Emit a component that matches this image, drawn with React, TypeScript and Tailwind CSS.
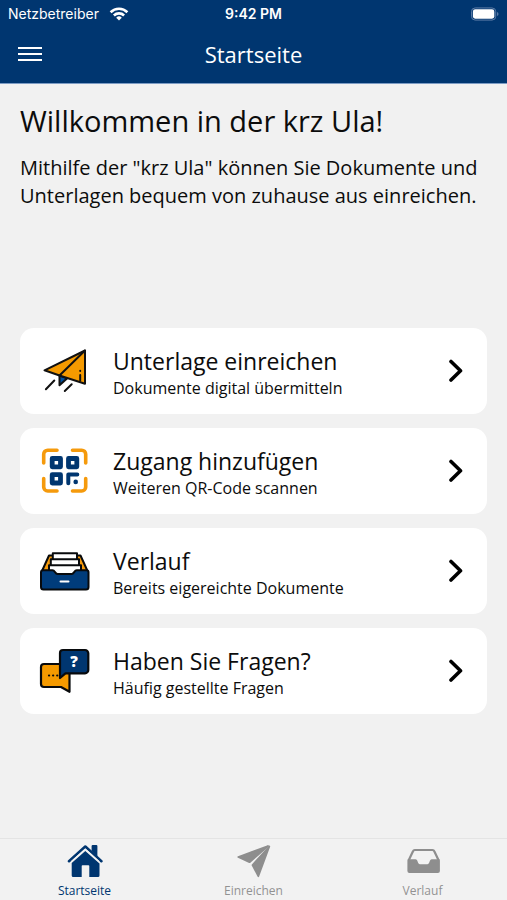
import React from "react";

function WifiIcon() {
  return (
    <svg width="20" height="14" viewBox="0 0 20 14" fill="none" stroke="white" strokeWidth="2.6" aria-hidden="true">
      <path d="M1.6 5.2a12 12 0 0 1 16.8 0" />
      <path d="M4.9 8.5a7.3 7.3 0 0 1 10.2 0" />
      <path d="M10 13.6L7.2 10.7a4 4 0 0 1 5.6 0z" fill="white" stroke="none" />
    </svg>
  );
}

function BatteryIcon() {
  return (
    <svg width="28" height="14" viewBox="0 0 30 14" aria-hidden="true">
      <rect x="0.5" y="0.5" width="26" height="13" rx="4" fill="none" stroke="#6482ab" />
      <rect x="2" y="2" width="23" height="10" rx="2.5" fill="white" />
      <path d="M28 4.8a2.4 2.4 0 0 1 0 4.4z" fill="#6482ab" />
    </svg>
  );
}

function PlaneIcon() {
  return (
    <svg width="60" height="60" viewBox="0 0 60 60" stroke="#111" strokeWidth="2" strokeLinejoin="round" strokeLinecap="round" aria-hidden="true">
      <path d="M24.5 34.5V44.3L32.3 37.2z" fill="#0050a0" />
      <path d="M9.5 29.3L50 9.5V42.7L24.5 34.5z" fill="#f59a00" />
      <path d="M50 9.5L24.5 34.5M45.2 34V39.4M45.2 29.8v.2M19.3 39.5L10.9 48.3M36.7 43.3L29.8 50" fill="none" />
    </svg>
  );
}

function QrIcon() {
  return (
    <svg width="60" height="60" viewBox="0 0 60 60" fill="none" aria-hidden="true">
      <path d="M8.7 22V13.2a4 4 0 0 1 4-4H22M37.5 9.2h9.2a4 4 0 0 1 4 4V22M50.7 37.5V46a4 4 0 0 1-4 4H37.5M22 50h-9.3a4 4 0 0 1-4-4v-8.5" stroke="#f59a0c" strokeWidth="3.6" strokeLinecap="round" />
      <g stroke="#003670" strokeWidth="4.8" strokeLinejoin="round">
        <rect x="17.2" y="17.5" width="8.3" height="8.3" />
        <rect x="33.5" y="17.5" width="8.3" height="8.3" />
        <rect x="17.2" y="33.7" width="8.3" height="8.3" />
        <path d="M33.3 42.3V33.5H42.3" strokeWidth="4" strokeLinecap="round" />
      </g>
      <circle cx="40.7" cy="40.9" r="2.3" fill="#003670" />
    </svg>
  );
}

function DrawerIcon() {
  return (
    <svg width="60" height="60" viewBox="0 0 60 60" stroke="#080a0c" strokeWidth="2" strokeLinejoin="round" aria-hidden="true">
      <path d="M7 30L14 14.5H45.5L52.5 30z" fill="#f59a0c" />
      <path d="M17.8 19V12.3H42V19z" fill="white" />
      <path d="M15.8 25V18.3H44V25z" fill="white" />
      <path d="M14 30V24.3H46V30L38 36H22z" fill="white" />
      <path d="M8 29.3H17.5c2.5 0 2.5 3.7 5 3.7H36.7c2.5 0 2.5-3.7 5-3.7H51.5a2 2 0 0 1 2 2V46a2.5 2.5 0 0 1-2.5 2.5H8.5A2.5 2.5 0 0 1 6 46V31.3a2 2 0 0 1 2-2z" fill="#003c7b" />
      <path d="M25.5 40.5h8" stroke="white" strokeLinecap="round" />
    </svg>
  );
}

function ChatIcon() {
  return (
    <svg width="60" height="60" viewBox="0 0 60 60" stroke="#080a0c" strokeWidth="2.2" strokeLinejoin="round" aria-hidden="true">
      <path d="M9 23H31L34.5 28V50.8L26 46H9a3 3 0 0 1-3-3V26a3 3 0 0 1 3-3z" fill="#f59a00" />
      <path d="M28 9H50a3.3 3.3 0 0 1 3.3 3.3V29A3.3 3.3 0 0 1 50 32.3H30.5L25 37V12a3 3 0 0 1 3-3z" fill="#003670" />
      <path d="M14 34.5h.1M18.1 34.5h.1M22.2 34.5h.1" strokeLinecap="round" />
      <text x="39" y="26" textAnchor="middle" fill="white" stroke="none" className="font-['Open_Sans',sans-serif] text-[15px] font-extrabold">?</text>
    </svg>
  );
}

function HomeTabIcon() {
  return (
    <svg width="36" height="36" viewBox="0 0 36 36" fill="#003670" aria-hidden="true">
      <path d="M18.3 7.9L32.5 20.5V32.5a1.5 1.5 0 0 1-1.5 1.5H22.3V23a.8.8 0 0 0-.8-.8H15.5a.8.8 0 0 0-.8.8V34H6.2a1.5 1.5 0 0 1-1.5-1.5V20z" />
      <path d="M24.6 8V3a1 1 0 0 1 1-1H29.400a1 1 0 0 1 1 1V14z" />
      <path d="M2 18.2L18.3 3.5L34.4 18.2" fill="none" stroke="#003670" strokeWidth="2.6" strokeLinejoin="round" strokeLinecap="round" />
      <path d="M4.5 18.5L18.3 6.2L32.3 18.7" fill="none" stroke="#f2f2f2" strokeWidth="1.2" strokeLinejoin="round" />
    </svg>
  );
}

function SendTabIcon() {
  return (
    <svg width="36" height="36" viewBox="0 0 36 36" fill="#8e8e8e" stroke="#8e8e8e" strokeWidth="1.8" strokeLinejoin="round" aria-hidden="true">
      <path d="M2.3 14L32 3L13.5 19.2z" />
      <path d="M33.3 3.5L22.3 33.2L16.5 22z" />
    </svg>
  );
}

function TrayTabIcon() {
  return (
    <svg width="36" height="36" viewBox="0 0 36 36" fill="#8e8e8e" aria-hidden="true">
      <path d="M3.6 17.5L8 8.2a2 2 0 0 1 1.8-1.2H27.5a2 2 0 0 1 1.8 1.2L33.7 17.5" fill="none" stroke="#8e8e8e" strokeWidth="2.2" />
      <path d="M2.4 17.5a1.2 1.2 0 0 1 1.2-1.2H10.5c2.5 0 2 5 4.5 5H22.3c2.5 0 2-5 4.5-5H33.7a1.2 1.2 0 0 1 1.2 1.2V28a2 2 0 0 1-2 2H4.4a2 2 0 0 1-2-2z" />
    </svg>
  );
}

const cards = [
  { title: "Unterlage einreichen", text: "Dokumente digital übermitteln", Icon: PlaneIcon },
  { title: "Zugang hinzufügen", text: "Weiteren QR-Code scannen", Icon: QrIcon },
  { title: "Verlauf", text: "Bereits eigereichte Dokumente", Icon: DrawerIcon },
  { title: "Haben Sie Fragen?", text: "Häufig gestellte Fragen", Icon: ChatIcon },
];

const tabs = [
  { label: "Startseite", Icon: HomeTabIcon, color: "text-[#003670]" },
  { label: "Einreichen", Icon: SendTabIcon, color: "text-[#929292]" },
  { label: "Verlauf", Icon: TrayTabIcon, color: "text-[#929292]" },
];

export default function App() {
  return (
    <div className="flex min-h-screen flex-col bg-[#f1f1f1] font-['Open_Sans','Noto_Sans',sans-serif] text-[#0c0c0c]">
      <header className="border-b border-[#7d9cc4] bg-[#003670] text-white">
        <div className="grid h-7 grid-cols-3 items-center px-2 font-[Inter,sans-serif] text-sm leading-5">
          <div className="flex items-center gap-[10px]">
            <span>Netzbetreiber</span>
            <WifiIcon />
          </div>
          <span className="text-center font-semibold">9:42 PM</span>
          <div className="flex justify-end">
            <BatteryIcon />
          </div>
        </div>
        <div className="grid h-[55px] grid-cols-3 items-center px-[18px] pb-[3px]">
          <button type="button" aria-label="Menü" className="flex w-6 flex-col gap-[4px]">
            <span className="h-[2px] w-full bg-white" />
            <span className="h-[2px] w-full bg-white" />
            <span className="h-[2px] w-full bg-white" />
          </button>
          <span className="text-center text-[22px] leading-7">Startseite</span>
        </div>
      </header>

      <main className="flex-1 px-5 pt-[17px]">
        <h1 className="text-[29px] leading-10">Willkommen in der krz Ula!</h1>
        <p className="mt-[13px] min-h-[174px] text-xl leading-7">
          Mithilfe der "krz Ula" können Sie Dokumente und Unterlagen bequem von zuhause aus einreichen.
        </p>
        <div className="flex flex-col gap-[14px]">
          {cards.map(({ title, text, Icon }) => (
            <button key={title} type="button" className="flex h-[86px] items-center rounded-[14px] bg-white pr-5 pl-[15px] text-left">
              <Icon />
              <span className="ml-[18px] flex flex-1 flex-col pt-[2px]">
                <span className="text-[23px] leading-8">{title}</span>
                <span className="text-base leading-[22px]">{text}</span>
              </span>
              <svg width="24" height="24" viewBox="0 0 24 24" fill="none" stroke="black" strokeWidth="3.6" strokeLinecap="round" strokeLinejoin="round" aria-hidden="true">
                <path d="M8 2.5L17.5 11.8L8 21" />
              </svg>
            </button>
          ))}
        </div>
      </main>

      <nav className="grid h-[62px] grid-cols-3 border-t border-[#e4e4e4] bg-[#f2f2f2]">
        {tabs.map(({ label, Icon, color }) => (
          <button key={label} type="button" className={`flex flex-col items-center pt-1 text-xs leading-4 ${color}`}>
            <Icon />
            <span className="mt-1">{label}</span>
          </button>
        ))}
      </nav>
    </div>
  );
}
